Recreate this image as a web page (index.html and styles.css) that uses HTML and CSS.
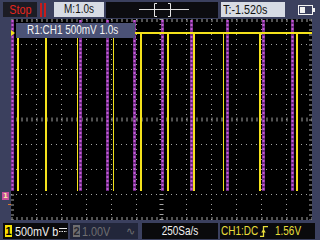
FILE: index.html
```html
<!DOCTYPE html>
<html lang="en">
<head>
    <meta charset="UTF-8">
    <title>Scope - Stop</title>
    <link rel="stylesheet" href="styles.css">
</head>
<body>
    <div class="screen">

        <!-- Top status bar -->
        <div class="topbar">
            <div class="stop"><span class="txt">Stop</span></div>
            <div class="run-state"><i></i><i></i></div>
            <div class="timebase"><span class="txt">M:1.0s</span></div>
            <div class="trig-pos">
                <svg width="112" height="16" viewBox="0 0 112 16">
                    <g stroke="#e4e4e4" stroke-width="1" fill="none">
                        <path d="M33 7.5 H83"/>
                        <path d="M51 1.5 H48.5 V14.5 H51"/>
                        <path d="M62 1.5 H64.5 V14.5 H62"/>
                    </g>
                </svg>
            </div>
            <div class="trig-time"><span class="txt">T:-1.520s</span></div>
            <div class="battery">
                <svg width="17" height="10" viewBox="0 0 17 10">
                    <rect x="0.5" y="0.5" width="14" height="9" fill="none" stroke="#f2f2f2"/>
                    <rect x="15" y="3" width="2" height="4" fill="#f2f2f2"/>
                    <rect x="2" y="2" width="5" height="6" fill="#f2f2f2"/>
                </svg>
            </div>
        </div>

        <!-- Waveform area -->
        <div class="middle">
            <div class="ch-marker">1</div>
            <div class="ofs-tick"></div>
            <div class="scope">
                <svg width="301" height="201" viewBox="0 0 301 201" id="grid"></svg>
                <div class="ref-label"><span class="txt">R1:CH1 500mV 1.0s</span></div>
            </div>
        </div>

        <!-- Bottom channel bar -->
        <div class="bottombar">
            <div class="chan ch1">
                <span class="badge">1</span>
                <span class="txt volts">500mV b</span>
                <svg width="8" height="6" viewBox="0 0 8 6">
                    <path d="M0 1.5 H8" stroke="#e8e8e8"/>
                    <path d="M0 4.5 H8" stroke="#e8e8e8" stroke-dasharray="1.5 1"/>
                </svg>
            </div>
            <div class="chan ch2">
                <span class="badge">2</span>
                <span class="txt volts">1.00V</span>
                <span class="ac">&#8767;</span>
            </div>
            <div class="chan rate"><span class="txt">250Sa/s</span></div>
            <div class="chan trig">
                <span class="txt coupling">CH1:DC</span>
                <svg width="8" height="11" viewBox="0 0 8 11">
                    <path d="M0 10.5 H3.5 V0.5 H8" stroke="#e8de3a" stroke-width="1.3" fill="none"/>
                    <path d="M1.2 6.5 L3.5 3 L5.8 6.5 Z" fill="#e8de3a"/>
                </svg>
                <span class="txt level">1.56V</span>
            </div>
        </div>
    </div>

    <script>
        // Draw graticule and traces into the scope svg
        const svg = document.getElementById('grid');
        const NS = 'http://www.w3.org/2000/svg';

        function line(x1, y1, x2, y2, attrs) {
            const l = document.createElementNS(NS, 'line');
            l.setAttribute('x1', x1);
            l.setAttribute('y1', y1);
            l.setAttribute('x2', x2);
            l.setAttribute('y2', y2);
            for (const k in attrs) l.setAttribute(k, attrs[k]);
            svg.appendChild(l);
        }

        const dot = { stroke: '#a4a4a4', 'stroke-width': 1, 'stroke-dasharray': '1 4' };
        const tick = { stroke: '#a4a4a4', 'stroke-width': 3, 'stroke-dasharray': '1 4' };

        // dotted division lines
        for (let i = 1; i < 8; i++) {
            if (i === 4) continue;
            line(0, i * 25 + 0.5, 301, i * 25 + 0.5, dot);
        }
        for (let i = 1; i < 12; i++) {
            if (i === 6) continue;
            line(i * 25 + 0.5, 0, i * 25 + 0.5, 201, dot);
        }

        // centre lines with ticks
        line(0.5, 100.5, 301, 100.5, { stroke: '#a4a4a4', 'stroke-width': 4, 'stroke-dasharray': '1 4' });
        line(150.5, 0, 150.5, 201, { stroke: '#a4a4a4', 'stroke-width': 4, 'stroke-dasharray': '1 4' });

        // edge ticks
        line(0.5, 1.5, 301, 1.5, tick);
        line(0.5, 199.5, 301, 199.5, tick);
        line(1.5, 0.5, 1.5, 201, tick);
        line(299.5, 0.5, 299.5, 201, tick);

        // reference trace R1 (purple)
        const purple = [1, 69, 96, 123, 151, 180, 216, 252, 281];
        purple.forEach(function (x) {
            line(x + 0.5, 1, x + 0.5, 172, { stroke: '#6c2a82', 'stroke-width': 3 });
            line(x + 0.5, 1, x + 0.5, 172, { stroke: '#c45ad6', 'stroke-width': 2, 'stroke-dasharray': '2 2' });
        });

        // CH1 trace (yellow)
        const yellow = [[6, 2], [34, 2], [66, 1], [102, 1], [129, 2], [156, 2], [182, 2], [212, 1], [248, 2], [285, 2]];
        line(6, 14, 301, 14, { stroke: '#f4e21c', 'stroke-width': 2 });
        yellow.forEach(function (p) {
            const x = p[1] === 2 ? p[0] + 1 : p[0] + 0.5;
            line(x, 13, x, 172, { stroke: '#f4e21c', 'stroke-width': p[1] });
        });

        // trigger level arrow
        const arrow = document.createElementNS(NS, 'path');
        arrow.setAttribute('d', 'M0 11 L4 14 L0 17 Z');
        arrow.setAttribute('fill', '#f4e21c');
        svg.appendChild(arrow);
    </script>
</body>
</html>
```

FILE: styles.css
```css
body {
    margin: 0;
    background-color: #3b405e;
    font-family: "Liberation Sans", Arial, sans-serif;
}

.screen {
    width: 320px;
    height: 240px;
    overflow: hidden;
    display: flex;
    flex-direction: column;
}

/* the scope font is narrow, squeeze Arial to fit */
.txt {
    display: inline-block;
    white-space: nowrap;
    transform: scaleX(0.83);
    transform-origin: 0 50%;
}

/* Top status bar */
.topbar {
    height: 19px;
    display: flex;
    align-items: center;
}

.stop {
    margin-left: 3px;
    width: 34px;
    height: 15px;
    line-height: 15px;
    background-color: #1c1c24;
    color: #e4261e;
    font-size: 13px;
    text-align: center;
}

.stop .txt,
.timebase .txt,
.rate .txt {
    transform-origin: 50% 50%;
}

.run-state {
    display: flex;
    margin-left: 3px;
    gap: 2px;
}

.run-state i {
    width: 2px;
    height: 14px;
    background-color: #c61c1c;
}

.timebase {
    margin-left: 8px;
    width: 50px;
    height: 15px;
    line-height: 15px;
    background-color: #d7dbe4;
    color: #111;
    font-size: 12px;
    text-align: center;
}

.trig-pos {
    margin-left: 2px;
    width: 112px;
    height: 16px;
    background-color: #0c0c10;
}

.trig-pos svg {
    display: block;
}

.trig-time {
    margin-left: 3px;
    width: 62px;
    padding-left: 2px;
    height: 15px;
    line-height: 15px;
    background-color: #d7dbe4;
    color: #111;
    font-size: 13px;
}

.battery {
    margin-left: 13px;
    height: 10px;
}

.battery svg {
    display: block;
}

/* Waveform area */
.middle {
    position: relative;
    height: 201px;
    padding-left: 11px;
    display: flex;
}

.scope {
    position: relative;
    width: 301px;
    height: 201px;
    background-color: #000;
}

.scope svg {
    display: block;
}

.ref-label {
    position: absolute;
    left: 5px;
    top: 4px;
    width: 108px;
    height: 15px;
    padding-left: 11px;
    line-height: 15px;
    background-color: #4b5276;
    color: #f4f4f4;
    font-size: 12px;
}

.ch-marker {
    position: absolute;
    left: 2px;
    top: 173px;
    width: 7px;
    height: 8px;
    background-color: #c8509c;
    color: #f4e8a0;
    font-family: "DejaVu Sans", sans-serif;
    font-size: 7px;
    font-weight: bold;
    line-height: 8px;
    text-align: center;
}

.ofs-tick {
    position: absolute;
    left: 8px;
    top: 185px;
    width: 3px;
    height: 1px;
    background-color: #d87830;
}

/* Bottom channel bar */
.bottombar {
    margin-top: 3px;
    height: 16px;
    display: flex;
}

.chan {
    height: 16px;
    display: flex;
    align-items: center;
    background-color: #0a0a0c;
    font-size: 13px;
}

.badge {
    width: 7px;
    height: 12px;
    line-height: 12px;
    text-align: center;
    font-size: 11px;
    font-weight: bold;
}

.ch1 {
    margin-left: 3px;
    width: 65px;
    color: #f2f2f2;
}

.ch1 .badge {
    margin-left: 2px;
    background-color: #f6e000;
    color: #000;
}

.ch1 .volts {
    margin-left: 3px;
    width: 43px;
}

.ch1 svg {
    margin-left: 1px;
    margin-top: -3px;
}

.ch2 {
    margin-left: 2px;
    width: 68px;
    background-color: #22263a;
    color: #6e6e70;
}

.ch2 .badge {
    margin-left: 3px;
    background-color: #6e6e70;
    color: #2a2a30;
}

.ch2 .volts {
    margin-left: 2px;
    width: 28px;
}

.ch2 .ac {
    margin-left: auto;
    margin-right: 3px;
    font-size: 11px;
}

.rate {
    margin-left: 4px;
    width: 76px;
    justify-content: center;
    color: #f2f2f2;
    font-size: 12px;
}

.trig {
    margin-left: 2px;
    width: 94px;
    padding-left: 1px;
    color: #e8de3a;
    font-size: 12px;
}

.trig .coupling {
    width: 36px;
}

.trig svg {
    margin-left: 3px;
}

.trig .level {
    margin-left: 7px;
}
```
